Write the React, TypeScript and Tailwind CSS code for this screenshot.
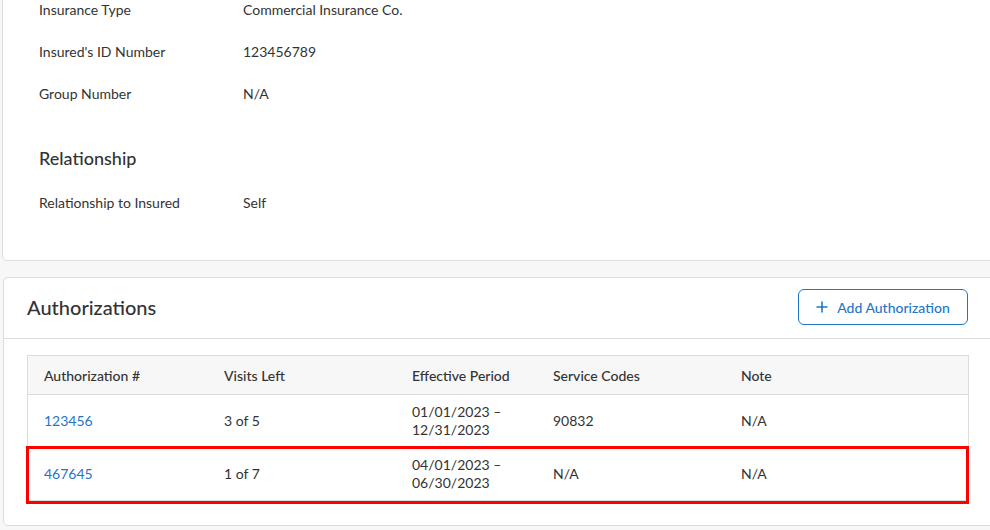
import React from "react";

const font = { fontFamily: "Lato, 'Liberation Sans', sans-serif" };

function InfoRow({ label, value }: { label: string; value: string }) {
  return (
    <div className="flex h-[42px] items-center text-[14px] text-[#333]">
      <div className="w-[204px]">{label}</div>
      <div>{value}</div>
    </div>
  );
}

const rows = [
  { id: "123456", visits: "3 of 5", period: "01/01/2023 – 12/31/2023", codes: "90832", note: "N/A", hl: false },
  { id: "467645", visits: "1 of 7", period: "04/01/2023 – 06/30/2023", codes: "N/A", note: "N/A", hl: true },
];

export default function App() {
  return (
    <div className="w-[990px] h-[530px] overflow-hidden bg-[#f7f7f7]" style={font}>
      <div className="pl-[2px] mr-[-20px] mt-[-13px]">
        <div className="bg-white border border-[#dcdcdc] rounded-[5px] pl-[36px] pb-[37px]">
          <InfoRow label="Insurance Type" value="Commercial Insurance Co." />
          <InfoRow label="Insured's ID Number" value="123456789" />
          <InfoRow label="Group Number" value="N/A" />
          <div className="h-[21px]" />
          <div className="h-[46px] flex items-center text-[18px] font-medium text-[#333]">Relationship</div>
          <InfoRow label="Relationship to Insured" value="Self" />
        </div>
      </div>

      <div className="pl-[3px] mr-[-20px] mt-[16px]">
        <div className="bg-white border border-[#dcdcdc] rounded-[5px]">
          <div className="flex items-center justify-between h-[61px] pl-[23px] pr-[41px] border-b border-[#dcdcdc]">
            <div className="text-[20px] text-[#333] font-medium pb-[2px]">Authorizations</div>
            <button className="flex items-center gap-[9px] h-[36px] w-[170px] justify-center border border-[#1f76c7] rounded-[6px] text-[#1f76c7] text-[14px] font-medium bg-white mb-[2px]">
              <svg width="12" height="12" viewBox="0 0 12 12">
                <path d="M6 0.5v11M0.5 6h11" stroke="#1f76c7" strokeWidth="1.6" />
              </svg>
              Add Authorization
            </button>
          </div>
          <div className="pt-[16px] pl-[23px] pb-[24px]">
            <div className="w-[942px] border border-[#dcdcdc] text-[14px] text-[#333]">
              <div className="flex h-[39px] items-center bg-[#f7f7f7] border-b border-[#dcdcdc] font-medium">
                <div className="w-[180px] pl-[16px]">Authorization #</div>
                <div className="w-[188px] pl-[16px]">Visits Left</div>
                <div className="w-[141px] pl-[16px]">Effective Period</div>
                <div className="w-[188px] pl-[16px]">Service Codes</div>
                <div className="flex-1 pl-[16px]">Note</div>
              </div>
              {rows.map((r, i) => (
                <div key={r.id} className={`relative flex items-center ${i === 0 ? "h-[52px] border-b border-[#dcdcdc]" : "h-[53px]"}`}>
                  <div className="w-[180px] pl-[16px] text-[#1f76c7]">{r.id}</div>
                  <div className="w-[188px] pl-[16px]">{r.visits}</div>
                  <div className="w-[141px] pl-[16px] pr-[12px] leading-[18px]">{r.period}</div>
                  <div className="w-[188px] pl-[16px]">{r.codes}</div>
                  <div className="flex-1 pl-[16px]">{r.note}</div>
                  {r.hl && (
                    <div className="absolute left-[-2px] top-[-1px] w-[943px] h-[58px] border-[3px] border-[#ff0000] pointer-events-none" />
                  )}
                </div>
              ))}
            </div>
          </div>
        </div>
      </div>
    </div>
  );
}
